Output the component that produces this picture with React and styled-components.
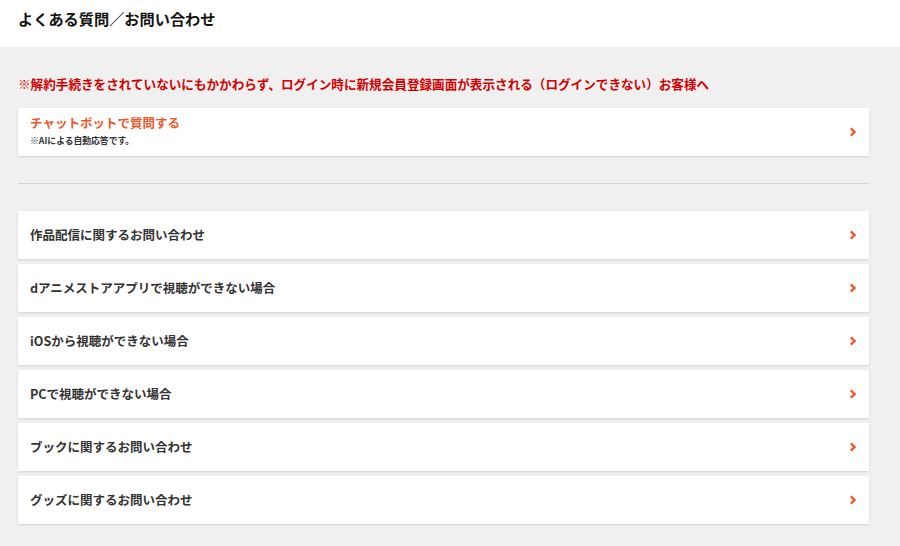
import React from "react";
import styled, { createGlobalStyle } from "styled-components";

const Global = createGlobalStyle`
  html, body { margin: 0; padding: 0; background: #f0f0f0; }
  body { font-family: "Noto Sans CJK JP", "Noto Sans", sans-serif; }
  * { box-sizing: border-box; }
`;

const Page = styled.div`
  width: 900px;
  min-height: 546px;
  background: #f0f0f0;
`;

const Header = styled.header`
  height: 47px;
  background: #fff;
  display: flex;
  align-items: flex-start;
  padding: 7px 18px 0;
`;

const Title = styled.h1`
  margin: 0;
  font-size: 15.2px;
  font-weight: 700;
  color: #111;
  line-height: 22px;
`;

const Main = styled.main`
  padding: 28px 31px 20px 18px;
  display: flex;
  flex-direction: column;
`;

const Notice = styled.p`
  margin: 0 0 15px;
  font-size: 12.6px;
  font-weight: 700;
  color: #d40000;
  line-height: 18px;
`;

const Card = styled.a`
  display: flex;
  align-items: center;
  justify-content: space-between;
  height: 48px;
  padding: 0 12px 0 12px;
  background: #fff;
  box-shadow: 0 1px 2px rgba(0, 0, 0, 0.12);
  text-decoration: none;
  cursor: pointer;
`;

const CardBody = styled.div`
  display: flex;
  flex-direction: column;
  gap: 3px;
  padding-bottom: 3px;
`;

const CardTitle = styled.span`
  font-size: 12.5px;
  font-weight: 700;
  line-height: 18px;
  color: ${(p) => (p.$accent ? "#ea5a2c" : "#333")};
`;

const CardSub = styled.span`
  font-size: 8.8px;
  font-weight: 700;
  color: #333;
  line-height: 12px;
`;

const Divider = styled.hr`
  margin: 27px 0 27px;
  border: 0;
  border-top: 1px solid #d4d4d4;
`;

const List = styled.div`
  display: flex;
  flex-direction: column;
  gap: 5px;
`;

const Chevron = () => (
  <svg width="8" height="10" viewBox="0 0 8 10" aria-hidden="true">
    <path d="M1.8 1.3 L5.6 5 L1.8 8.7" fill="none" stroke="#ea5a2c" strokeWidth="2.4" />
  </svg>
);

const items = [
  "作品配信に関するお問い合わせ",
  "dアニメストアアプリで視聴ができない場合",
  "iOSから視聴ができない場合",
  "PCで視聴ができない場合",
  "ブックに関するお問い合わせ",
  "グッズに関するお問い合わせ",
];

export default function App() {
  return (
    <Page>
      <Global />
      <Header>
        <Title>よくある質問／お問い合わせ</Title>
      </Header>
      <Main>
        <Notice>
          ※解約手続きをされていないにもかかわらず、ログイン時に新規会員登録画面が表示される（ログインできない）お客様へ
        </Notice>
        <Card>
          <CardBody>
            <CardTitle $accent>チャットボットで質問する</CardTitle>
            <CardSub>※AIによる自動応答です。</CardSub>
          </CardBody>
          <Chevron />
        </Card>
        <Divider />
        <List>
          {items.map((t) => (
            <Card key={t}>
              <CardTitle>{t}</CardTitle>
              <Chevron />
            </Card>
          ))}
        </List>
      </Main>
    </Page>
  );
}
